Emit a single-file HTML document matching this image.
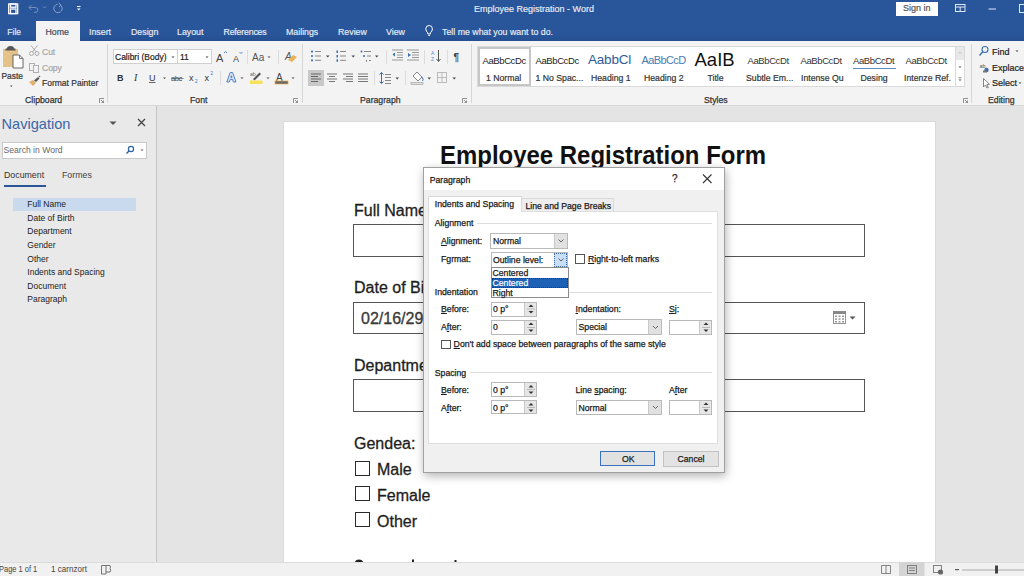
<!DOCTYPE html>
<html><head><meta charset="utf-8">
<style>
*{margin:0;padding:0;box-sizing:border-box}
html,body{width:1024px;height:576px;overflow:hidden;background:#e4e4e4;font-family:"Liberation Sans",sans-serif;color:#262626}
.a{position:absolute;white-space:nowrap}
#titlebar{position:absolute;left:0;top:0;width:1024px;height:41px;background:linear-gradient(#29559a 0,#29559a 34px,#254f92 41px)}
.tw{color:#e9eef5;font-size:8.8px;-webkit-text-stroke:.15px #e9eef5}
#ribbon{position:absolute;left:0;top:41px;width:1024px;height:65px;background:#f3f3f3;border-bottom:1px solid #d9d9d9}
.rt{font-size:9px;color:#333;-webkit-text-stroke:.2px currentColor}
.gl{font-size:9px;color:#333;-webkit-text-stroke:.25px #333}
.sep{position:absolute;width:1px;background:#d4d4d4}
#nav{position:absolute;left:0;top:0;width:157px;height:562px;background:#e9e9e9;border-right:1px solid #c6c6c6;clip-path:inset(106px 0 0 0)}
#page{position:absolute;left:282.5px;top:121px;width:653px;height:441px;background:#fff;border:1px solid #dadada;border-bottom:none}
#status{position:absolute;left:0;top:562px;width:1024px;height:14px;background:#f1f1f1;border-top:1px solid #dcdcdc}
.doc{font-size:16px;color:#1e1e1e;-webkit-text-stroke:.3px #1e1e1e}
.box{position:absolute;border:1px solid #555;background:#fff}
.cb{position:absolute;border:1.6px solid #2a2a2a;background:#fff}
#dlg{position:absolute;left:423px;top:167px;width:301.5px;height:306px;background:#f0f0f0;border:1px solid #a0a0a0;box-shadow:1px 3px 9px rgba(0,0,0,.3)}
.dl{font-size:8.7px;color:#1a1a1a;position:absolute;white-space:nowrap;-webkit-text-stroke:.25px #1a1a1a}
.inp{position:absolute;background:#fff;border:1px solid #b9b9b9}
.spin{position:absolute;background:#e6e6e6;border-left:1px solid #c9c9c9;top:0;right:0;bottom:0;width:12px}
.cmbbtn{position:absolute;background:#e1e1e1;border-left:1px solid #c9c9c9;top:0;right:0;bottom:0;width:13px}
u{text-decoration-thickness:1px;text-underline-offset:1px}
</style></head><body>

<div id="titlebar">
  <div class="a tw" style="left:474px;top:4px;font-size:9px">Employee Registration - Word</div>
  <div class="a rt" style="left:896px;top:2px;width:41.5px;height:13.5px;background:#fff;color:#555;font-size:9px;text-align:center;line-height:13.5px">Sign in</div>
  <div class="a tw" style="left:7.3px;top:26.7px;font-size:8.5px">File</div>
  <div class="a" style="left:36px;top:21px;width:44px;height:20px;background:#f3f3f3"></div>
  <div class="a rt" style="left:45.5px;top:26.7px;font-size:8.8px;color:#3c4a60">Home</div>
  <div class="a tw" style="left:89px;top:26.7px">Insert</div>
  <div class="a tw" style="left:131px;top:26.7px">Design</div>
  <div class="a tw" style="left:177px;top:26.7px">Layout</div>
  <div class="a tw" style="left:223.5px;top:26.7px;letter-spacing:-.2px">References</div>
  <div class="a tw" style="left:286px;top:26.7px">Mailings</div>
  <div class="a tw" style="left:338px;top:26.7px">Review</div>
  <div class="a tw" style="left:386px;top:26.7px">View</div>
  <div class="a tw" style="left:442px;top:26.7px">Tell me what you want to do.</div>
</div>


<div id="ribbon"></div>
<!-- title bar icons -->
<svg class="a" style="left:0;top:0" width="1024" height="41" viewBox="0 0 1024 41">
  <g fill="none" stroke="#fff" stroke-width="1.3">
    <rect x="8.7" y="4" width="9" height="9.6"/>
    <rect x="10.5" y="4" width="5.5" height="3.2"/>
    <rect x="10.5" y="9" width="5.5" height="4.6"/>
  </g>
  <g fill="none" stroke="#7890b8" stroke-width="1">
    <path d="M29 7.5 L31.5 5 M29 7.5 L31.5 10 M29 7.5 H35 Q38 7.5 38 10 Q38 12.5 34 12.5"/>
    <path d="M43 6.5 L44.5 8 L46 6.5"/>
  </g>
  <g fill="none" stroke="#8aa3cc" stroke-width="1">
    <path d="M61 5.5 A4.2 4.2 0 1 1 57.5 4.3"/>
    <path d="M58.5 3 L61 5 L59 7"/>
  </g>
  <g fill="#fff"><rect x="77" y="6" width="3.5" height="1"/><path d="M77 8.5 H80.5 L78.75 10.5Z"/></g>
  <!-- right icons -->
  <g fill="none" stroke="#dfe7f3" stroke-width="1">
    <rect x="955.5" y="4.5" width="9.5" height="7"/>
    <path d="M955.5 7 H965 M960.2 7 V11.5"/>
  </g>
  <rect x="988.5" y="8.5" width="7.5" height="1" fill="#dfe7f3"/>
  <rect x="1019.5" y="4.5" width="8" height="8" fill="none" stroke="#dfe7f3"/>
  <!-- light bulb -->
  <g fill="none" stroke="#fff" stroke-width="1">
    <path d="M427.8 34 V32.8 Q425.8 31.3 425.8 28.8 A3.3 3.3 0 0 1 432.4 28.8 Q432.4 31.3 430.4 32.8 V34 Z"/>
    <path d="M428.3 35.5 H430"/>
  </g>
</svg>

<!-- Clipboard group -->
<svg class="a" style="left:0;top:41px" width="1024" height="64" viewBox="0 41 1024 64">
  <!-- paste -->
  <rect x="3" y="49" width="15" height="18" fill="#e4c08a"/>
  <g fill="#f3e27a"><circle cx="5" cy="52" r=".6"/><circle cx="8" cy="54" r=".6"/><circle cx="5" cy="57" r=".6"/><circle cx="8" cy="60" r=".6"/><circle cx="5" cy="63" r=".6"/><circle cx="11" cy="51" r=".6"/></g>
  <path d="M7 48.5 Q7 46 10.5 46 Q14 46 14 48.5 H15.5 V50.5 H5.5 V48.5Z" fill="#555"/>
  <path d="M13 55 H19.5 L23 58.5 V68 H13Z" fill="#fff" stroke="#666" stroke-width="1"/>
  <path d="M19.5 55 V58.5 H23" fill="none" stroke="#666" stroke-width=".8"/>
  <path d="M10 85.5 H12.5 L11.25 87Z" fill="#444"/>
  <!-- cut -->
  <g fill="none" stroke="#aaa" stroke-width="1">
    <circle cx="31.5" cy="53.5" r="2"/><circle cx="37" cy="53.5" r="2"/>
    <path d="M32.5 51.8 L37.5 45.5 M36 51.8 L31 45.5"/>
  </g>
  <!-- copy -->
  <g fill="#f3f3f3" stroke="#b0b0b0" stroke-width="1">
    <rect x="29.5" y="63.5" width="5" height="7"/>
    <rect x="33.5" y="65.5" width="5" height="7"/>
  </g>
  <!-- format painter -->
  <path d="M29 82 L33 80 L36 83 L33 86 Z" fill="#e0b070"/>
  <path d="M34 80.5 L38 77 L39.5 78.5 L36 82Z" fill="#555"/>
  <circle cx="39.5" cy="76.5" r=".8" fill="#555"/>
  <!-- launchers -->
  <g fill="none" stroke="#777" stroke-width=".8">
    <path d="M99.5 103 V98.5 H104"/><path d="M101 100 L103.5 102.5 M103.5 100.5 V102.5 H101.5"/>
    <path d="M293.5 103 V98.5 H298"/><path d="M295 100 L297.5 102.5 M297.5 100.5 V102.5 H295.5"/>
    <path d="M462.5 103 V98.5 H467"/><path d="M464 100 L466.5 102.5 M466.5 100.5 V102.5 H464.5"/>
    <path d="M963.5 103 V98.5 H968"/><path d="M965 100 L967.5 102.5 M967.5 100.5 V102.5 H965.5"/>
  </g>
  <!-- group separators -->
  <g fill="#d6d6d6">
    <rect x="107" y="44" width="1" height="59"/>
    <rect x="302" y="44" width="1" height="59"/>
    <rect x="471" y="44" width="1" height="59"/>
    <rect x="971" y="44" width="1" height="59"/>
  </g>
  <g fill="#dcdcdc">
    <rect x="247" y="50" width="1" height="14"/>
    <rect x="278" y="50" width="1" height="14"/>
    <rect x="220" y="71" width="1" height="14"/>
    <rect x="386" y="50" width="1" height="14"/>
    <rect x="424" y="50" width="1" height="14"/>
    <rect x="447" y="50" width="1" height="14"/>
    <rect x="374" y="71" width="1" height="14"/>
    <rect x="405" y="71" width="1" height="14"/>
  </g>
</svg>
<div class="a rt" style="left:1.5px;top:71px;font-size:8.4px">Paste</div>
<div class="a rt" style="left:42px;top:47px;font-size:8.5px;color:#a6a6a6">Cut</div>
<div class="a rt" style="left:42px;top:63px;font-size:8.5px;color:#a6a6a6">Copy</div>
<div class="a rt" style="left:42px;top:78px;font-size:8.5px">Format Painter</div>
<div class="a gl" style="left:25px;top:95px;font-size:8.7px">Clipboard</div>

<!-- Font group -->
<div class="a" style="left:113px;top:49px;width:65px;height:15px;background:#fff;border:1px solid #d0d0d0"></div>
<div class="a" style="left:177px;top:49px;width:35px;height:15px;background:#fff;border:1px solid #d0d0d0"></div>
<div class="a rt" style="left:115px;top:51.5px;font-size:8.5px;color:#222">Calibri (Body)</div>
<div class="a rt" style="left:180px;top:51.5px;font-size:8.5px;color:#222">11</div>
<svg class="a" style="left:0;top:41px" width="1024" height="64" viewBox="0 41 1024 64">
  <g fill="#444"><path d="M171.5 56.5 H174.5 L173 58Z"/><path d="M205.5 56.5 H208.5 L207 58Z"/></g>
  <!-- grow/shrink font -->
  <text x="216" y="62" font-family="Liberation Sans" font-size="11" fill="#444">A</text>
  <path d="M224 53 L225.5 51.5 L227 53" fill="none" stroke="#2b6fc0" stroke-width=".8"/>
  <text x="233" y="62" font-family="Liberation Sans" font-size="9" fill="#444">A</text>
  <path d="M239.5 52 L241 53.5 L242.5 52" fill="none" stroke="#2b6fc0" stroke-width=".8"/>
  <text x="252" y="60.5" font-family="Liberation Sans" font-size="10" fill="#555">Aa</text>
  <path d="M267.5 56.5 H270.5 L269 58Z" fill="#444"/>
  <!-- clear formatting -->
  <text x="285" y="60" font-family="Liberation Sans" font-size="10" font-style="italic" fill="#555">A</text>
  <path d="M288 60 L293 55 L297 57 L292 62Z" fill="#e6b35a"/>
  <!-- row 2 -->
  <text x="117" y="81" font-family="Liberation Sans" font-size="9" font-weight="bold" fill="#333">B</text>
  <text x="134" y="81" font-family="Liberation Serif" font-size="10" font-style="italic" fill="#333">I</text>
  <text x="149" y="80.5" font-family="Liberation Sans" font-size="9" fill="#333">U</text>
  <rect x="149" y="82" width="6.5" height=".9" fill="#555"/>
  <path d="M163 77.5 H166 L164.5 79Z" fill="#444"/>
  <text x="171" y="80.5" font-family="Liberation Sans" font-size="7.6" fill="#444" letter-spacing="-.5">abc</text>
  <rect x="171" y="78" width="12.5" height=".7" fill="#555"/>
  <text x="189" y="81" font-family="Liberation Sans" font-size="9" fill="#333">x</text>
  <text x="195" y="83" font-family="Liberation Sans" font-size="4.5" fill="#2b6fc0">2</text>
  <text x="204.5" y="81" font-family="Liberation Sans" font-size="9" fill="#333">x</text>
  <text x="210.5" y="75" font-family="Liberation Sans" font-size="4.5" fill="#2b6fc0">2</text>
  <!-- text effects -->
  <path d="M226.8 82 L230.2 72.5 H232.6 L236 82 H233.4 L232.6 79.5 H230.2 L229.4 82Z M230.9 77.5 H231.9 L231.4 75.8Z" fill="#d6e2f2" stroke="#5585c2" stroke-width="1" stroke-linejoin="round"/>
  <path d="M240.5 77.5 H243.5 L242 79Z" fill="#444"/>
  <!-- highlight -->
  <path d="M253 79 L259.5 72.5 L261 74 L254.5 80.5Z" fill="#555"/>
  <text x="250" y="76" font-family="Liberation Sans" font-size="5" fill="#666">ab</text>
  <rect x="250" y="80.5" width="12.5" height="3.5" fill="#f5e25a"/>
  <path d="M266.5 77.5 H269.5 L268 79Z" fill="#444"/>
  <!-- font color -->
  <text x="276" y="80.5" font-family="Liberation Sans" font-size="10" fill="#444">A</text>
  <rect x="275" y="81" width="13" height="3" fill="#666" stroke="#e5a84a" stroke-width=".7"/>
  <path d="M291.5 77.5 H294.5 L293 79Z" fill="#444"/>
</svg>
<div class="a gl" style="left:190px;top:95px;font-size:8.7px">Font</div>

<!-- Paragraph group -->
<svg class="a" style="left:0;top:41px" width="1024" height="64" viewBox="0 41 1024 64">
  <g fill="#444"><path d="M326 55.5 H329.5 L327.75 57.5Z"/><path d="M351.5 55.5 H355 L353.25 57.5Z"/><path d="M375 55.5 H378.5 L376.75 57.5Z"/>
  <path d="M395.5 77.5 H399 L397.25 79.5Z"/><path d="M427.5 77.5 H431 L429.25 79.5Z"/><path d="M452.5 77.5 H456 L454.25 79.5Z"/></g>
  <!-- bullets -->
  <g fill="#3b6fb0"><circle cx="312" cy="51.6" r="1.1"/><circle cx="312" cy="56" r="1.1"/><circle cx="312" cy="60.3" r="1.1"/></g>
  <g fill="#888"><rect x="315" y="51" width="6" height="1"/><rect x="315" y="55.5" width="6" height="1"/><rect x="315" y="59.8" width="6" height="1"/></g>
  <!-- numbering -->
  <g fill="#3b6fb0"><rect x="336.5" y="50.5" width="1.5" height="2.5"/><rect x="336.5" y="55" width="1.5" height="2.5"/><rect x="336.5" y="59.3" width="1.5" height="2.5"/></g>
  <g fill="#888"><rect x="340" y="51" width="6" height="1"/><rect x="340" y="55.5" width="6" height="1"/><rect x="340" y="59.8" width="6" height="1"/></g>
  <!-- multilevel -->
  <g fill="#3b6fb0"><circle cx="361.5" cy="51.6" r="1"/><circle cx="364" cy="56" r="1"/></g>
  <g fill="#888"><rect x="364" y="51" width="7" height="1"/><rect x="367" y="55.5" width="4" height="1"/><rect x="366" y="59.8" width="1" height="2"/><rect x="369" y="60" width="2" height="1"/></g>
  <!-- indent dec/inc -->
  <g fill="#999"><rect x="392" y="49.5" width="11" height="1"/><rect x="397" y="52" width="6" height="1"/><rect x="397" y="54.5" width="6" height="1"/><rect x="397" y="57" width="6" height="1"/><rect x="392" y="59.5" width="11" height="1"/></g>
  <path d="M392.5 54.5 L395 52.5 V56.5Z" fill="#3b6fb0"/>
  <g fill="#999"><rect x="407" y="49.5" width="12" height="1"/><rect x="412" y="52" width="7" height="1"/><rect x="412" y="54.5" width="7" height="1"/><rect x="412" y="57" width="7" height="1"/><rect x="407" y="59.5" width="12" height="1"/></g>
  <path d="M408 53 L411 55 L408 57Z" fill="#3b6fb0"/>
  <!-- sort -->
  <text x="431" y="55" font-family="Liberation Sans" font-size="5" fill="#5b8cc8">A</text>
  <text x="431" y="61" font-family="Liberation Sans" font-size="5" fill="#5b8cc8">Z</text>
  <path d="M438.5 50 V61 M436.5 59 L438.5 61.5 L440.5 59" fill="none" stroke="#555" stroke-width="1"/>
  <!-- pilcrow -->
  <text x="453.5" y="61" font-family="Liberation Sans" font-size="10" font-weight="bold" fill="#444">¶</text>
  <!-- align left (selected) -->
  <rect x="308" y="70" width="16" height="16" fill="#c8c8c8"/>
  <g fill="#666"><rect x="311" y="73.5" width="10" height="1"/><rect x="311" y="76" width="7" height="1"/><rect x="311" y="78.5" width="10" height="1"/><rect x="311" y="81" width="7" height="1"/></g>
  <g fill="#777"><rect x="327" y="73.5" width="10" height="1"/><rect x="329" y="76" width="6" height="1"/><rect x="327" y="78.5" width="10" height="1"/><rect x="329" y="81" width="6" height="1"/></g>
  <g fill="#777"><rect x="343" y="73.5" width="10" height="1"/><rect x="346" y="76" width="7" height="1"/><rect x="343" y="78.5" width="10" height="1"/><rect x="346" y="81" width="7" height="1"/></g>
  <g fill="#777"><rect x="358" y="73.5" width="10" height="1"/><rect x="358" y="76" width="10" height="1"/><rect x="358" y="78.5" width="10" height="1"/><rect x="358" y="81" width="10" height="1"/></g>
  <!-- line spacing -->
  <path d="M381.5 72.5 V83.5 M379.5 74.5 L381.5 72.5 L383.5 74.5 M379.5 81.5 L381.5 83.5 L383.5 81.5" fill="none" stroke="#3b6fb0" stroke-width="1"/>
  <g fill="#888"><rect x="385" y="74" width="6" height="1"/><rect x="385" y="77" width="6" height="1"/><rect x="385" y="80" width="6" height="1"/><rect x="385" y="83" width="6" height="1"/></g>
  <!-- shading -->
  <path d="M413 76 L417 72 L422 77 L418 81Z" fill="#fff" stroke="#777" stroke-width=".9"/>
  <path d="M422 77 Q424 80 422.5 81" fill="none" stroke="#3b6fb0" stroke-width="1"/>
  <rect x="411" y="82.5" width="12" height="2" fill="#e0e0e0" stroke="#999" stroke-width=".6"/>
  <!-- borders -->
  <g fill="none" stroke="#bbb" stroke-width="1"><rect x="437.5" y="72.5" width="9" height="10"/><path d="M442 72.5 V82.5 M437.5 77.5 H446.5"/></g>
</svg>
<div class="a gl" style="left:360px;top:95px;font-size:8.7px">Paragraph</div>

<!-- Styles gallery -->
<div class="a" style="left:477px;top:46px;width:488px;height:41px;background:#fff;border:1px solid #d9d9d9"></div>
<div class="a" style="left:478px;top:47px;width:53px;height:39px;border:2px solid #c6c6c6"></div>
<div class="a" style="left:955px;top:46px;width:10px;height:41px;background:#fff;border:1px solid #d9d9d9"></div>
<div class="a" style="left:956px;top:47px;width:8px;height:13px;background:#e8e8e8"></div>
<svg class="a" style="left:0;top:41px" width="1024" height="64" viewBox="0 41 1024 64">
  <path d="M958.5 53.5 L960 52 L961.5 53.5" fill="none" stroke="#bbb" stroke-width=".8"/>
  <path d="M958.5 66.5 H961.5 L960 68Z" fill="#555"/>
  <rect x="958.5" y="77.5" width="3" height=".7" fill="#555"/><path d="M958.5 79.5 H961.5 L960 81Z" fill="#555"/>
  <!-- find -->
  <circle cx="985" cy="49.5" r="3" fill="none" stroke="#3b6fb0" stroke-width="1.1"/>
  <path d="M982.8 51.8 L979.5 55.5" stroke="#3b6fb0" stroke-width="1.4"/>
  <path d="M1015.5 50.5 H1018.5 L1017 52Z" fill="#444"/>
  <!-- replace -->
  <text x="979.5" y="68" font-family="Liberation Sans" font-size="5.5" fill="#555">ab</text>
  <circle cx="986.5" cy="70" r="2.2" fill="#3b6fb0"/>
  <rect x="983" y="70.5" width="4" height="2" fill="#777"/>
  <!-- select -->
  <path d="M983.5 78.5 L983.5 87 L985.5 85 L987 88 L988.3 87.4 L986.8 84.5 L989.5 84.3 Z" fill="#fff" stroke="#666" stroke-width=".8"/>
  <path d="M1018.5 82.5 H1021.5 L1020 84Z" fill="#444"/>
</svg>
<div class="a" style="left:482.5px;top:55px;font-size:9.5px;color:#222;letter-spacing:-.4px">AaBbCcDc</div>
<div class="a rt" style="left:486px;top:72.5px;font-size:8.7px;color:#333">1 Normal</div>
<div class="a" style="left:535.5px;top:55px;font-size:9.5px;color:#222;letter-spacing:-.4px">AaBbCcDc</div>
<div class="a rt" style="left:535.5px;top:72.5px;font-size:8.7px;color:#333">1 No Spac...</div>
<div class="a" style="left:588px;top:52px;font-size:13.5px;color:#2e5c99;letter-spacing:-.2px">AabbCl</div>
<div class="a rt" style="left:591px;top:72.5px;font-size:8.7px;color:#333">Heading 1</div>
<div class="a" style="left:641.5px;top:54px;font-size:11px;color:#4a7ab5;letter-spacing:-.6px">AaBbCcD</div>
<div class="a rt" style="left:644px;top:72.5px;font-size:8.7px;color:#333">Heading 2</div>
<div class="a" style="left:694.5px;top:48.5px;font-size:18.5px;color:#111">AaIB</div>
<div class="a rt" style="left:707.5px;top:72.5px;font-size:8.7px;color:#333">Title</div>
<div class="a" style="left:747.5px;top:55px;font-size:9.5px;color:#333;letter-spacing:-.4px">AaBbCcDt</div>
<div class="a rt" style="left:746px;top:72.5px;font-size:8.7px;color:#333">Subtle Em...</div>
<div class="a" style="left:800.5px;top:55px;font-size:9.5px;color:#333;letter-spacing:-.4px">AaBbCcDt</div>
<div class="a rt" style="left:801px;top:72.5px;font-size:8.7px;color:#333">Intense Qu</div>
<div class="a" style="left:853px;top:55px;font-size:9.5px;color:#333;letter-spacing:-.4px">AaBbCcDt</div>
<div class="a" style="left:853px;top:67.5px;width:43px;height:1px;background:#5b8cc8"></div>
<div class="a rt" style="left:860.5px;top:72.5px;font-size:8.7px;color:#333">Desing</div>
<div class="a" style="left:905.5px;top:55px;font-size:9.5px;color:#333;letter-spacing:-.4px">AaBbCcDt</div>
<div class="a rt" style="left:904px;top:72.5px;font-size:8.7px;color:#333">Intenze Ref.</div>
<div class="a gl" style="left:704px;top:95px;font-size:8.7px">Styles</div>
<div class="a rt" style="left:992px;top:46.5px;font-size:9px;color:#222">Find</div>
<div class="a rt" style="left:992px;top:62.5px;font-size:9px;color:#222">Explace</div>
<div class="a rt" style="left:992px;top:78px;font-size:9px;color:#222">Select</div>
<div class="a gl" style="left:988px;top:95px;font-size:8.7px">Editing</div>

<div id="nav">
  <div class="a" style="left:1.5px;top:116px;font-size:14.6px;color:#3a67a8">Navigation</div>
  <div class="a" style="left:2px;top:141.5px;width:145px;height:17px;background:#fff;border:1px solid #c9c9c9"></div>
  <div class="a" style="left:3.5px;top:145px;font-size:8.6px;color:#666">Search in Word</div>
  <svg class="a" style="left:0;top:0" width="157" height="576" viewBox="0 0 157 576">
    <path d="M109.5 121.5 H116.5 L113 125Z" fill="#555"/>
    <path d="M138 119 L145 126 M145 119 L138 126" stroke="#444" stroke-width="1.3"/>
    <circle cx="131" cy="149" r="2.6" fill="none" stroke="#2b62a8" stroke-width="1.2"/>
    <path d="M129.2 150.8 L126.5 153.5" stroke="#2b62a8" stroke-width="1.4"/>
    <path d="M140.5 149.5 H143.5 L142 151Z" fill="#555"/>
  </svg>
  <div class="a" style="left:4px;top:169.5px;font-size:8.8px;color:#333">Document</div>
  <div class="a" style="left:3.5px;top:184.5px;width:42.5px;height:2px;background:#2b579a"></div>
  <div class="a" style="left:62px;top:169.5px;font-size:8.8px;color:#444">Formes</div>
  <div class="a" style="left:12.5px;top:198px;width:123.5px;height:13px;background:#c9daee"></div>
  <div class="a" style="left:27.3px;top:198.3px;font-size:8.5px;color:#222;line-height:13.58px">Full Name<br>Date of Birth<br>Department<br>Gender<br>Other<br>Indents and Spacing<br>Document<br>Paragraph</div>
</div>

<div id="page"></div>

<!-- document content -->
<div class="a" style="left:439.8px;top:139.5px;font-size:26px;font-weight:bold;color:#111;transform:scaleX(.921);transform-origin:left">Employee Registration Form</div>
<div class="a doc" style="left:354px;top:201.5px">Full Name</div>
<div class="box" style="left:353px;top:224px;width:512px;height:33px"></div>
<div class="a doc" style="left:354px;top:278.5px">Date of Birth</div>
<div class="box" style="left:353px;top:302px;width:512px;height:32px"></div>
<div class="a doc" style="left:361px;top:310px;color:#444">02/16/29</div>
<div class="a doc" style="left:354px;top:356.5px">Depantment</div>
<div class="box" style="left:353px;top:379px;width:512px;height:33px"></div>
<div class="a doc" style="left:354px;top:434.5px">Gendea:</div>
<div class="cb" style="left:355px;top:461px;width:15px;height:15px"></div>
<div class="a doc" style="left:377px;top:460.5px">Male</div>
<div class="cb" style="left:355px;top:486px;width:15px;height:15px"></div>
<div class="a doc" style="left:377px;top:486.5px">Female</div>
<div class="cb" style="left:355px;top:512px;width:15px;height:15px"></div>
<div class="a doc" style="left:377px;top:512.5px">Other</div>

<svg class="a" style="left:0;top:0" width="1024" height="576" viewBox="0 0 1024 576">
  <rect x="833" y="311.5" width="13" height="2.5" fill="#888"/>
  <g fill="none" stroke="#888" stroke-width=".9">
    <rect x="833.5" y="311.5" width="12" height="12"/>
  </g>
  <g fill="#999"><rect x="835" y="315.5" width="2" height="1.5"/><rect x="838.5" y="315.5" width="2" height="1.5"/><rect x="842" y="315.5" width="2" height="1.5"/>
  <rect x="835" y="318.3" width="2" height="1.5"/><rect x="838.5" y="318.3" width="2" height="1.5"/><rect x="842" y="318.3" width="2" height="1.5"/>
  <rect x="835" y="321" width="2" height="1.5"/><rect x="838.5" y="321" width="2" height="1.5"/><rect x="842" y="321" width="2" height="1.5"/></g>
  <path d="M849.5 316.5 H855.5 L852.5 319.5Z" fill="#555"/>
  <path d="M355 562 Q355.5 559.5 359 559.5 Q362.5 559.5 363 562Z" fill="#222"/>
  <rect x="412" y="559.5" width="2" height="2.5" fill="#222"/>
  <rect x="454.5" y="560" width="2" height="2" fill="#222"/>
</svg>
<div id="status"></div>
<div class="a" style="left:-1px;top:564px;font-size:8.5px;color:#444;transform:scaleX(.88);transform-origin:left">Page 1 of 1</div>
<div class="a" style="left:51px;top:564px;font-size:8.5px;color:#444;transform:scaleX(.95);transform-origin:left">1 carnzort</div>
<svg class="a" style="left:0;top:556px" width="1024" height="20" viewBox="0 556 1024 20">
  <g fill="none" stroke="#666" stroke-width=".9"><path d="M101.5 565.5 H106 V574 H101.5Z"/><path d="M106 565.5 H110 Q111 567 110 568.5 Q111.5 570 110 572 H106"/></g>
  <rect x="899" y="562" width="25.5" height="14" fill="#d4d4d4"/>
  <g fill="none" stroke="#777" stroke-width=".9">
    <path d="M881.5 565.5 H886 V573.5 H881.5Z M886 565.5 H890.5 V573.5 H886"/>
    <rect x="907.5" y="565.5" width="9" height="8"/>
    <path d="M909 568 H915 M909 570.5 H915"/>
    <rect x="933.5" y="565.5" width="8" height="7"/>
  </g>
  <circle cx="940.5" cy="572" r="2.6" fill="#666"/>
  <rect x="955" y="569" width="4" height="1.2" fill="#555"/>
  <rect x="962" y="569.5" width="62" height="1" fill="#aaa"/>
  <rect x="995" y="565.5" width="3" height="8" fill="#444"/>
</svg>

<div id="dlg"></div>
<div class="a" style="left:424px;top:168px;width:299.5px;height:22px;background:#fff"></div>
<div class="a dl" style="left:429.7px;top:174.5px">Paragraph</div>
<div class="a dl" style="left:672px;top:173px;font-size:10px;color:#333">?</div>
<svg class="a" style="left:0;top:0" width="1024" height="576" viewBox="0 0 1024 576">
  <path d="M703 174.5 L711.5 183 M711.5 174.5 L703 183" stroke="#333" stroke-width="1.1"/>
</svg>
<div class="a" style="left:521px;top:197.5px;width:92.5px;height:14px;background:#eeeeee;border:1px solid #d9d9d9;border-bottom:none"></div>
<div class="a" style="left:427.8px;top:211px;width:290px;height:232.5px;background:#fff;border:1px solid #dedede"></div>
<div class="a" style="left:427.8px;top:195.5px;width:94px;height:16.5px;background:#fff;border:1px solid #d9d9d9;border-bottom:none"></div>
<div class="a dl" style="left:434.8px;top:198.5px">Indents and Spacing</div>
<div class="a dl" style="left:525.5px;top:200.5px">Line and Page Breaks</div>

<div class="a dl" style="left:434.8px;top:218px">Alignment</div>
<div class="a" style="left:477px;top:223px;width:235px;height:1px;background:#dcdcdc"></div>
<div class="a dl" style="left:441px;top:235.5px"><u>A</u>lignment:</div>
<div class="inp" style="left:490.3px;top:232.6px;width:77.5px;height:16.5px"><div class="cmbbtn"></div></div>
<div class="a dl" style="left:493px;top:236px">Normal</div>
<div class="a dl" style="left:441px;top:254px">Fgrmat:</div>
<div class="inp" style="left:490.5px;top:252px;width:77.5px;height:15.5px"><div class="cmbbtn" style="background:#c9def5;border:1px dotted #3c6db0;width:13px"></div></div>
<div class="a dl" style="left:493px;top:254.5px">Outline level:</div>
<div class="a" style="left:490.5px;top:267px;width:78px;height:31px;background:#fff;border:1px solid #8c8c8c"></div>
<div class="a" style="left:491.5px;top:278px;width:76px;height:9.5px;background:#1c61b5;border:1px dotted #0b3d80"></div>
<div class="a dl" style="left:492.5px;top:267.8px;font-size:8.7px;line-height:10.1px;color:#222">Centered<br><span style="color:#fff;-webkit-text-stroke:.2px #fff">Centered</span><br>Right</div>
<div class="a" style="left:575.3px;top:254.4px;width:10px;height:9.7px;background:#fff;border:1px solid #555"></div>
<div class="a dl" style="left:588px;top:254px"><u>R</u>ight-to-left marks</div>

<div class="a dl" style="left:434.8px;top:286.5px">Indentation</div>
<div class="a" style="left:568.5px;top:291.5px;width:143.5px;height:1px;background:#dcdcdc"></div>
<div class="a dl" style="left:441px;top:304px"><u>B</u>efore:</div>
<div class="inp" style="left:490.5px;top:302px;width:46.5px;height:14.5px"><div class="spin"></div></div>
<div class="a dl" style="left:493px;top:304px">0 p°</div>
<div class="a dl" style="left:441px;top:322px">A<u>f</u>ter:</div>
<div class="inp" style="left:490.5px;top:320px;width:46.5px;height:15px"><div class="spin"></div></div>
<div class="a dl" style="left:493px;top:322px">0</div>
<div class="a dl" style="left:575.5px;top:304px"><u>I</u>ndentation:</div>
<div class="a dl" style="left:669px;top:304px"><u>S</u>j:</div>
<div class="inp" style="left:575.5px;top:319px;width:86.5px;height:16px"><div class="cmbbtn"></div></div>
<div class="a dl" style="left:578.5px;top:322px">Special</div>
<div class="inp" style="left:669px;top:320px;width:43px;height:15px"><div class="spin"></div></div>
<div class="a" style="left:441px;top:339.7px;width:10px;height:9px;background:#fff;border:1px solid #555"></div>
<div class="a dl" style="left:453.6px;top:339px"><u>D</u>on't add space between paragraphs of the same style</div>

<div class="a dl" style="left:434.8px;top:367.5px">Spacing</div>
<div class="a" style="left:470px;top:372px;width:242px;height:1px;background:#dcdcdc"></div>
<div class="a dl" style="left:441px;top:384.5px"><u>B</u>efore:</div>
<div class="inp" style="left:490.5px;top:382.3px;width:46.5px;height:14.3px"><div class="spin"></div></div>
<div class="a dl" style="left:493px;top:384.5px">0 p°</div>
<div class="a dl" style="left:441px;top:402.5px">A<u>f</u>ter:</div>
<div class="inp" style="left:490.5px;top:400.3px;width:46.5px;height:14px"><div class="spin"></div></div>
<div class="a dl" style="left:493px;top:402.5px">0 p°</div>
<div class="a dl" style="left:575.5px;top:384.5px">Line <u>s</u>pacing:</div>
<div class="a dl" style="left:669px;top:384.5px">A<u>f</u>ter</div>
<div class="inp" style="left:575.5px;top:399.5px;width:86.5px;height:15.5px"><div class="cmbbtn"></div></div>
<div class="a dl" style="left:578.5px;top:402.5px">Normal</div>
<div class="inp" style="left:669px;top:400px;width:43px;height:14.5px"><div class="spin"></div></div>

<svg class="a" style="left:0;top:0" width="1024" height="576" viewBox="0 0 1024 576">
  <g fill="none" stroke="#555" stroke-width=".9">
    <path d="M558.5 239.5 L561 242 L563.5 239.5"/>
    <path d="M558.5 258.5 L561 261 L563.5 258.5"/>
    <path d="M653 326 L655.5 328.5 L658 326"/>
    <path d="M653 406 L655.5 408.5 L658 406"/>
  </g>
  <g fill="#333">
    <path d="M528.5 307 L531 304.5 L533.5 307Z"/><path d="M528.5 311 L531 313.5 L533.5 311Z"/><rect x="527" y="308.7" width="8" height=".6" fill="#999"/>
    <path d="M528.5 325 L531 322.5 L533.5 325Z"/><path d="M528.5 329.5 L531 332 L533.5 329.5Z"/><rect x="527" y="327" width="8" height=".6" fill="#999"/>
    <path d="M528.5 387.5 L531 385 L533.5 387.5Z"/><path d="M528.5 391.5 L531 394 L533.5 391.5Z"/><rect x="527" y="389.2" width="8" height=".6" fill="#999"/>
    <path d="M528.5 405.5 L531 403 L533.5 405.5Z"/><path d="M528.5 409.5 L531 412 L533.5 409.5Z"/><rect x="527" y="407" width="8" height=".6" fill="#999"/>
    <path d="M703.5 325 L706 322.5 L708.5 325Z"/><path d="M703.5 329.5 L706 332 L708.5 329.5Z"/><rect x="702" y="327" width="8" height=".6" fill="#999"/>
    <path d="M703.5 405 L706 402.5 L708.5 405Z"/><path d="M703.5 409.5 L706 412 L708.5 409.5Z"/><rect x="702" y="407" width="8" height=".6" fill="#999"/>
  </g>
</svg>

<div class="a" style="left:600.3px;top:450.7px;width:55.2px;height:15.7px;background:#e1e1e1;border:1.5px solid #3a72bd"></div>
<div class="a dl" style="left:622px;top:453.5px;color:#222">OK</div>
<div class="a" style="left:663px;top:451px;width:55.5px;height:15.5px;background:#e3e3e3;border:1px solid #c2c2c2"></div>
<div class="a dl" style="left:677.5px;top:453.5px;color:#222">Cancel</div>
</body></html>
